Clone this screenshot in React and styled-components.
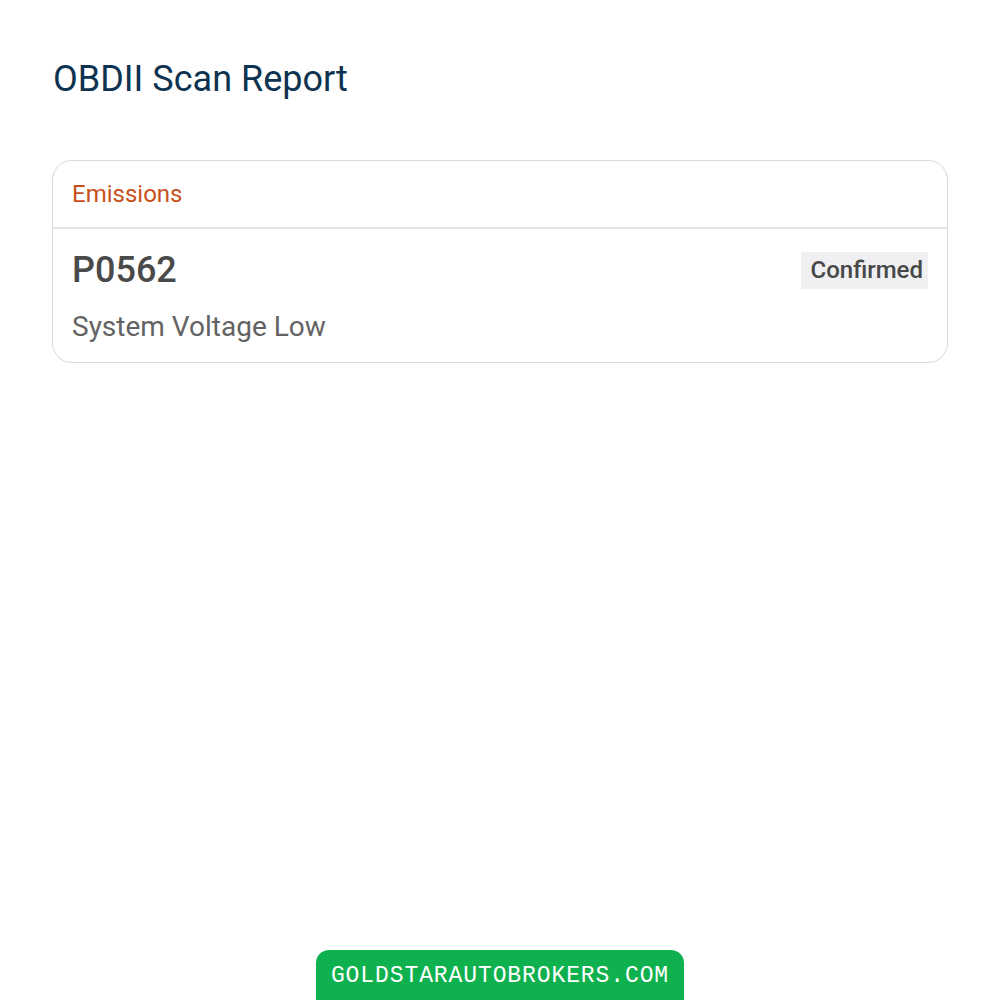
import React from "react";
import styled, { createGlobalStyle } from "styled-components";

const Global = createGlobalStyle`
  html, body { margin: 0; padding: 0; background: #ffffff; }
  body { font-family: Roboto, "Noto Sans", sans-serif; }
`;

const Page = styled.div`
  width: 1000px;
  height: 1000px;
  box-sizing: border-box;
  padding: 55px 52px 0 52px;
  display: flex;
  flex-direction: column;
  position: relative;
  overflow: hidden;
`;

const Title = styled.h1`
  margin: 0 0 0 1px;
  font-size: 36px;
  font-weight: 400;
  line-height: 48px;
  color: #0d3350;
`;

const Card = styled.section`
  margin-top: 57px;
  border: 1px solid #d9d9dc;
  border-radius: 20px;
  overflow: hidden;
`;

const CardHeader = styled.div`
  height: 66px;
  display: flex;
  align-items: center;
  padding: 0 19px;
  border-bottom: 2px solid #e2e2e4;
  color: #c8501a;
  font-size: 24px;
`;

const Row = styled.div`
  padding: 21px 19px 18px 19px;
  display: flex;
  flex-direction: column;
  gap: 20px;
`;

const RowTop = styled.div`
  display: flex;
  align-items: center;
  justify-content: space-between;
`;

const Code = styled.div`
  font-size: 36px;
  font-weight: 500;
  color: #4a4a4a;
  line-height: 40px;
`;

const Badge = styled.span`
  background: #f0f0f3;
  color: #474747;
  font-size: 24px;
  font-weight: 500;
  padding: 3px 5px 3px 10px;
  line-height: 31px;
`;

const Description = styled.div`
  font-size: 28px;
  color: #636363;
  line-height: 34px;
`;

const Footer = styled.div`
  position: absolute;
  left: 316px;
  bottom: -12px;
  width: 368px;
  height: 62px;
  box-sizing: border-box;
  background: #0fb14e;
  border-radius: 13px;
  display: flex;
  justify-content: center;
  padding-top: 13px;
  color: #ffffff;
  font-family: "Liberation Mono", "Courier New", monospace;
  font-size: 23px;
  letter-spacing: 0.9px;
`;

export default function App() {
  return (
    <>
      <Global />
      <Page>
        <Title>OBDII Scan Report</Title>
        <Card>
          <CardHeader>Emissions</CardHeader>
          <Row>
            <RowTop>
              <Code>P0562</Code>
              <Badge>Confirmed</Badge>
            </RowTop>
            <Description>System Voltage Low</Description>
          </Row>
        </Card>
        <Footer>GOLDSTARAUTOBROKERS.COM</Footer>
      </Page>
    </>
  );
}
